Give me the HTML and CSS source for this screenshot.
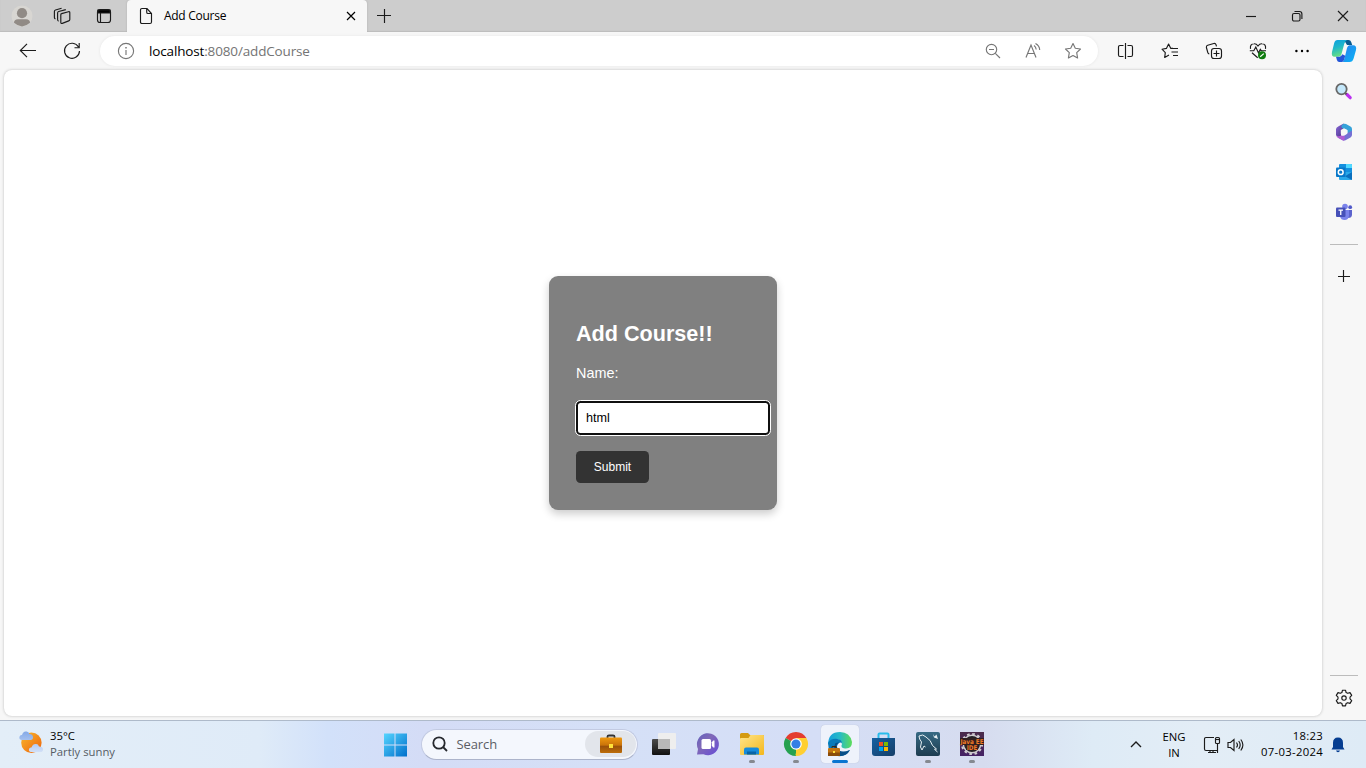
FILE: index.html
```html
<!DOCTYPE html>
<html lang="en">
<head>
<meta charset="utf-8">
<title>Add Course</title>
<link rel="stylesheet" href="styles.css">
</head>
<body>
<div class="screen">
  <header class="titlebar">
    <div class="title-tools">
      <svg class="avatar" width="22" height="22" viewBox="0 0 22 22"><circle cx="11" cy="11" r="10.5" fill="#d8d6d2"/><circle cx="11" cy="8.2" r="5.1" fill="#918b86"/><path d="M3 17.8Q3 14.2 7 14.2H15Q19 14.2 19 17.8Q11 25 3 17.8Z" fill="#918b86"/></svg>
      <svg class="line workspaces" width="18" height="18" viewBox="0 0 18 18"><path d="M8.6 6.6L15.4 4.7Q16.8 4.4 16.8 5.8V12.4Q16.8 13.5 15.7 13.9L9.3 16.4Q7.8 16.8 7.8 15.3V7.7Q7.8 6.8 8.6 6.6ZM5.6 14.2Q4.6 13.8 4.6 12.6V6Q4.6 4.9 5.7 4.5L12.8 2.6M2.4 11.9Q1.4 11.5 1.4 10.4V4.4Q1.4 3.3 2.5 3L8.6 1.2"/></svg>
      <svg class="line tab-actions" width="16" height="16" viewBox="0 0 16 16"><rect x="1.5" y="1.5" width="13" height="13" rx="2.5"/><path d="M2 2H14V5H2Z" fill="#000"/><path d="M4.5 5V14"/></svg>
    </div>
    <div class="tab">
      <svg class="line" width="14" height="18" viewBox="0 0 14 18"><path d="M1.5 3Q1.5 1.5 3 1.5H8L12.5 6.5V15Q12.5 16.5 11 16.5H3Q1.5 16.5 1.5 15ZM7.7 1.6V5.2Q7.7 6.5 9 6.5H12.4"/></svg>
      <span class="tab-title">Add Course</span>
      <svg class="line close-tab" width="10" height="10" viewBox="0 0 10 10"><path d="M1 1L9 9M9 1L1 9"/></svg>
    </div>
    <svg class="line new-tab" width="16" height="16" viewBox="0 0 16 16"><path d="M8.5 1V15M1 7.5H15"/></svg>
    <div class="window-controls">
      <svg class="line" width="12" height="12" viewBox="0 0 12 12"><path d="M1 6.5H11"/></svg>
      <svg class="line" width="12" height="12" viewBox="0 0 12 12"><rect x="1.5" y="3.5" width="7.5" height="7.5" rx="1.5"/><path d="M3.5 1.5H8.5Q10.9 1.5 10.9 4V9"/></svg>
      <svg class="line" width="12" height="12" viewBox="0 0 12 12"><path d="M1 1L11 11M11 1L1 11"/></svg>
    </div>
  </header>

  <nav class="toolbar">
    <div class="slot"><svg class="line" width="18" height="16" viewBox="0 0 18 16"><path d="M17 7.5H1.5M8 .8L1.3 7.5L8 14.2"/></svg></div>
    <div class="slot"><svg class="line" width="18" height="18" viewBox="0 0 18 18"><path d="M15.5 5A7.5 7.5 0 1 0 16.5 9M16.2 1V5.7H11.5"/></svg></div>
    <div class="address">
      <svg class="line muted info" width="18" height="18" viewBox="0 0 18 18"><circle cx="9" cy="9" r="7.6"/><path d="M9 8V13"/><path d="M9 5V6.4" stroke-width="1.5"/></svg>
      <span class="url">localhost<span class="path">:8080/addCourse</span></span>
      <svg class="line muted zoom-out" width="16" height="16" viewBox="0 0 16 16"><circle cx="6.5" cy="6.5" r="5.2"/><path d="M4 6.5H9M10.3 10.3L15 15"/></svg>
      <svg class="line muted" width="18" height="18" viewBox="0 0 18 18"><path d="M2 15.5L7 3L12 15.5M3.7 11.5H10.4M10 3.5Q12 5 12.2 7.5M11.5 1.5Q15.6 3.8 15.7 8"/></svg>
      <svg class="line muted" width="18" height="18" viewBox="0 0 18 18"><path d="M9 1.6L11.3 6.2L16.5 7L12.7 10.7L13.6 16L9 13.5L4.4 16L5.3 10.7L1.5 7L6.7 6.2Z" stroke-linejoin="round"/></svg>
    </div>
    <div class="tools">
      <div class="slot"><svg class="line" width="18" height="18" viewBox="0 0 18 18"><path d="M6.5 3.5H3Q1.5 3.5 1.5 5V13Q1.5 14.5 3 14.5H6.5M10.5 3.5H14Q15.5 3.5 15.5 5V13Q15.5 14.5 14 14.5H10.5M8.5 1V17"/></svg></div>
      <div class="slot"><svg class="line" width="18" height="18" viewBox="0 0 18 18"><path d="M12 6.4H9.8L7.6 2L5.4 6.4L1 7.2L4.3 10.6L3.7 15.5L8 13M11 6.5H17M10.5 10H17M12 13.5H17" stroke-linejoin="round"/></svg></div>
      <div class="slot"><svg class="line" width="18" height="18" viewBox="0 0 18 18"><rect x="6.5" y="6.5" width="10" height="10" rx="2.5"/><path d="M11.5 8.5V14.5M8.5 11.5H14.5M4.3 12Q3.2 11.8 2.8 10.5L1.4 5.5Q1.1 3.8 2.7 3.3L8.8 1.5Q10.5 1.1 11 2.7L11.5 4.3"/></svg></div>
      <div class="slot"><svg class="line" width="18" height="18" viewBox="0 0 18 18"><path d="M1.5 6.8Q.8 2 5 1.8Q7.3 1.6 9 4Q10.7 1.6 13 1.8Q17.2 2 16.5 6.8M.8 8.7H4.8L6.8 5L9.5 11L11.3 7.4L12.2 8.7H17M3 10.8L8.7 15.8"/><circle cx="13" cy="13.2" r="4" fill="#107c10" stroke="none"/><path d="M11.2 14.7L14.8 11.6" stroke="#fff"/></svg></div>
      <div class="slot"><svg width="16" height="4" viewBox="0 0 16 4"><circle cx="2.4" cy="2" r="1.2"/><circle cx="8" cy="2" r="1.2"/><circle cx="13.6" cy="2" r="1.2"/></svg></div>
    </div>
    <svg class="copilot" width="26" height="24" viewBox="0 0 26 24"><defs><linearGradient id="ca" x2=".3" y2="1"><stop stop-color="#0a9ee0"/><stop offset=".5" stop-color="#20b8c8"/><stop offset="1" stop-color="#65df83"/></linearGradient><linearGradient id="cb" x2="1" y2="1"><stop stop-color="#2b80ed"/><stop offset="1" stop-color="#08b5f6"/></linearGradient></defs><path d="M13 1H17.5Q19.6 1 20.2 3L21.2 6H16Z" fill="#075b91"/><path d="M6.5 1H16Q14 2 13.2 5L10.5 15Q9.8 17.8 7 17.8H3.5Q0 17.6 1 13L3.2 4Q4 1 6.5 1Z" fill="url(#ca)"/><path d="M18.5 6.3H22Q26 6.3 25 11L22.6 19.5Q21.6 23 18.5 23H11.5Q12.8 22 13.5 19.5L16 9Q16.8 6.4 18.5 6.3Z" fill="url(#cb)"/><path d="M5 17.8H8.5Q10.3 17.4 11.4 15.3L14.2 16.7L13.5 19.5Q12.5 23 10.8 23H8.2Q6.5 22.8 5.9 21Z" fill="#2456d8"/></svg>
  </nav>

  <div class="workspace">
    <main class="page">
      <form class="card">
        <h2>Add Course!!</h2>
        <label for="name">Name:</label>
        <input id="name" class="name-input" type="text" value="html">
        <button class="submit" type="button">Submit</button>
      </form>
    </main>
    <aside class="sidebar">
      <div class="app"><svg width="18" height="18" viewBox="0 0 18 18"><path d="M12 11.5L15.2 14.7" stroke="#bb31f0" stroke-width="3.2" stroke-linecap="round"/><path d="M9.8 9.6L11.5 11.3" stroke="#555" stroke-width="2"/><circle cx="6.5" cy="6.1" r="5.2" fill="#c4e8fb" stroke="#686868" stroke-width="1.8"/></svg></div>
      <div class="app"><svg width="18" height="18" viewBox="0 0 18 18"><defs><linearGradient id="ma" x2="1" y2="1"><stop stop-color="#8a68dc"/><stop offset="1" stop-color="#46327e"/></linearGradient></defs><path d="M8.8.6L4 3Q1 4.5 1 6V12Q1 13.5 4 14.3L6 13V8L9.5 5.3V2Z" fill="url(#ma)"/><path d="M7 2Q9 0 11 1L15.5 3.6Q17 4.5 17 6V9.5L12.5 11V7.2L7.5 5.2Q5.4 4 7 2Z" fill="#36a2d9"/><path d="M17 7.5V12Q17 13.5 15.5 14.4L10.5 17.2Q9 18 7.5 17.2L2.5 14.4Q5 14.8 7 13.5L12.5 10Q15.8 8.5 17 7.5Z" fill="#7570d4"/><path d="M1.2 12.8Q3 14 6.5 12.5L10 13.6L9 17.7Q8 17.6 7.2 17L2.5 14.4Z" fill="#b15bd3"/><path d="M5.8 7.1L9 5.2L12.3 7.1V10.8L9 12.8L5.8 10.8Z" fill="#f7f7f7"/></svg></div>
      <div class="app"><svg width="18" height="18" viewBox="0 0 18 18"><rect x="4" y="1" width="13" height="9" rx="1" fill="#1490df"/><path d="M11 1H16Q17 1 17 2V5H11Z" fill="#50d9ff"/><path d="M4 9H17V16Q17 17 16 17H5Q4 17 4 16Z" fill="#28a8ea"/><path d="M17 9L10 13.2L17 17Z" fill="#0a6fbd"/><rect x="1" y="4.5" width="9.5" height="9.5" rx="1" fill="#0878c9"/><circle cx="5.7" cy="9.2" r="2.4" fill="none" stroke="#fff" stroke-width="1.5"/></svg></div>
      <div class="app"><svg width="18" height="18" viewBox="0 0 18 18"><circle cx="10" cy="3.5" r="2.8" fill="#7b83eb"/><circle cx="15.2" cy="4.2" r="1.9" fill="#5059c9"/><path d="M12 7H17V11.5Q17 15 13 15Z" fill="#5c63cd"/><path d="M5 7H14V12.5Q13.5 17 9.5 17Q6 17 5 13.5Z" fill="#7b83eb"/><rect x="1" y="4.5" width="9.5" height="9.5" rx="1" fill="#4650b8"/><path d="M3.5 7.2H8M5.75 7.2V12" stroke="#fff" stroke-width="1.3"/></svg></div>
      <div class="rule"></div>
      <div class="app add"><svg class="line" width="12" height="12" viewBox="0 0 12 12"><path d="M5.5 0V12M0 6.5H12"/></svg></div>
      <div class="rule bottom-rule"></div>
      <div class="app gear"><svg class="line" width="18" height="18" viewBox="0 0 18 18"><circle cx="9" cy="9" r="2.2"/><path stroke-linejoin="round" d="M7.5 1.2H10.5L11.1 3.5L12.7 4.3L15 3.6L16.7 6.4L15 8.2V9.8L16.7 11.6L15 14.4L12.7 13.7L11.1 14.5L10.5 16.8H7.5L6.9 14.5L5.3 13.7L3 14.4L1.3 11.6L3 9.8V8.2L1.3 6.4L3 3.6L5.3 4.3L6.9 3.5Z"/></svg></div>
    </aside>
  </div>

  <footer class="taskbar">
    <div class="weather">
      <svg width="25" height="24" viewBox="0 0 25 24"><defs><linearGradient id="sun" x2="1" y2="1"><stop stop-color="#f9b82b"/><stop offset="1" stop-color="#ed620c"/></linearGradient><linearGradient id="cloud" x2="0" y2="1"><stop stop-color="#83a9e8"/><stop offset="1" stop-color="#d2e0f7"/></linearGradient></defs><circle cx="12.4" cy="12.8" r="10.2" fill="url(#sun)"/><path d="M3 10Q0 9.8 .4 7Q.8 4.8 3 5Q4.2 .8 7.6 1.6Q9.8 1.9 10.4 4Q14 4.2 14 7.3Q14 10 11.5 10ZM12 22Q9.4 21.6 10 19Q10.6 17.1 12.4 17.5Q14 13.7 17 14.1Q19.2 14 20 16.5Q24 16.8 24 19.2Q24 22 21.8 22Z" fill="url(#cloud)"/></svg>
      <div class="weather-text"><span>35°C</span><span class="condition">Partly sunny</span></div>
    </div>
    <div class="launcher">
      <svg class="start" width="24" height="24" viewBox="0 0 24 24"><defs><linearGradient id="win" x2="1" y2="1"><stop stop-color="#56d5ff"/><stop offset="1" stop-color="#006fcb"/></linearGradient></defs><path d="M1 .5H11.5V11.5H1ZM12.5.5H24V11.5H12.5ZM1 12.5H11.5V23.5H1ZM12.5 12.5H24V23.5H12.5Z" fill="url(#win)"/></svg>
      <div class="search">
        <svg width="16" height="16" viewBox="0 0 16 16"><g fill="none" stroke="#25282d" stroke-width="1.8"><circle cx="7" cy="7" r="5.7"/><path d="M11 11L15 15"/></g></svg>
        <span>Search</span>
        <div class="highlight"><svg width="24" height="20" viewBox="0 0 24 20"><defs><linearGradient id="brief" x2="0" y2="1"><stop stop-color="#ee980f"/><stop offset=".5" stop-color="#c9730a"/><stop offset=".55" stop-color="#98500b"/><stop offset="1" stop-color="#bd6d09"/></linearGradient></defs><path d="M8.5 4V2.5Q8.5 1.5 10 1.5H14Q15.5 1.5 15.5 2.5V4" fill="none" stroke="#333" stroke-width="1.8"/><rect x="1" y="3.5" width="22" height="15.5" rx="1" fill="url(#brief)"/><rect x="10" y="10" width="4" height="4" fill="#ffe23a"/></svg></div>
      </div>
      <div class="apps">
        <div class="task"><svg width="24" height="24" viewBox="0 0 24 24"><defs><linearGradient id="dark" x2="0" y2="1"><stop stop-color="#4b4b4b"/><stop offset="1" stop-color="#111"/></linearGradient></defs><rect x="0" y="7" width="18" height="16" rx="1" fill="url(#dark)"/><rect x="6" y="1" width="18" height="16" rx="1" fill="#eee"/><path d="M6 7H18V17H6Z" fill="#b9b9b9"/></svg></div>
        <div class="task"><svg width="24" height="24" viewBox="0 0 24 24"><defs><linearGradient id="chat" x2="1" y2="1"><stop stop-color="#6262bd"/><stop offset=".4" stop-color="#8069b8"/><stop offset="1" stop-color="#664bd7"/></linearGradient></defs><path d="M1 22.5L2 17A11 11 0 1 1 7.5 22.3Z" fill="url(#chat)"/><rect x="5.5" y="7" width="9.5" height="10" rx="1.5" fill="#fff"/><path d="M15.8 10.2L17.2 8.5H18.5V15.5H17.2L15.8 13.8Z" fill="#fff"/></svg></div>
        <div class="task running"><svg width="24" height="24" viewBox="0 0 24 24"><defs><linearGradient id="folder" x2="1" y2="1"><stop stop-color="#ffe58b"/><stop offset="1" stop-color="#f4b71c"/></linearGradient></defs><path d="M0 2.5Q0 1 1.5 1H8L10 3H23Q24 3 24 4V8H0Z" fill="#d49a10"/><path d="M0 7Q0 6 1 6H8.5L10.5 3H23Q24 3 24 4V22Q24 23 23 23H1Q0 23 0 22Z" fill="url(#folder)"/><path d="M4 22.5V17.5Q4 15.5 6 15.5H17Q19 15.5 19 17.5V22.5Z" fill="#168bdc"/><path d="M7 19.5H16V22.5H7Z" fill="#0864a8"/></svg></div>
        <div class="task running"><svg width="24" height="24" viewBox="0 0 24 24"><path d="M12 12L1.6 6A12 12 0 0 1 22.4 6Z" fill="#e43d2f"/><path d="M12 12L22.4 6A12 12 0 0 1 12 24Z" fill="#ffcf32"/><path d="M12 12L12 24A12 12 0 0 1 1.6 6Z" fill="#25a150"/><path d="M12 6H22.4L16.8 15L12 24Q10 22 15.8 16Z" fill="#ffcf32"/><circle cx="12" cy="12" r="5.8" fill="#fff"/><circle cx="12" cy="12" r="4.6" fill="#347fe4"/></svg></div>
        <div class="task active running"><svg width="24" height="24" viewBox="0 0 24 24"><defs><linearGradient id="edge" x2="1"><stop stop-color="#159fdb"/><stop offset=".5" stop-color="#27bbc6"/><stop offset="1" stop-color="#5ddd58"/></linearGradient></defs><path d="M0 13Q0 0 12 0Q22 0 24 10Q24 17 17 16.5Q12 16 14 12Q13 7 8 7Q2 7 0 13Z" fill="url(#edge)"/><path d="M0 11Q2 6.5 8 6.7Q14 7 14 11.5Q13 10 11 11Q7 14 11 19Q15 22 22 18Q18 25 9.5 24Q0 21 0 11Z" fill="#087ab9"/><path d="M7.5 11Q3 19 11 23.8Q18 25 22 18Q12 22 9 16Q7.5 13 11 10.5Z" fill="#064e88"/><rect x="0" y="16" width="12" height="8" rx="1" fill="#c27411"/><path d="M0 20.5H12V24H0Z" fill="#8b4d09"/><path d="M4 16V14.5H8V16" fill="none" stroke="#392819"/><rect x="5" y="19" width="2" height="2" fill="#ffdf3c"/></svg></div>
        <div class="task"><svg width="24" height="24" viewBox="0 0 24 24"><defs><linearGradient id="store" x2="1" y2="1"><stop stop-color="#1561a3"/><stop offset="1" stop-color="#163e67"/></linearGradient></defs><path d="M6.5 7V2.5Q6.5 1.5 7.5 1.5H15.5Q16.5 1.5 16.5 2.5V7" fill="none" stroke="#28bceb" stroke-width="2"/><path d="M0 6H23V21Q23 24 20 24H3Q0 24 0 21Z" fill="url(#store)"/><path d="M7 10H11V14H7Z" fill="#f25022"/><path d="M12 10H16V14H12Z" fill="#7fba00"/><path d="M7 15H11V19H7Z" fill="#00a4ef"/><path d="M12 15H16V19H12Z" fill="#ffb900"/></svg></div>
        <div class="task running"><svg width="24" height="24" viewBox="0 0 24 24"><defs><linearGradient id="sql" x2="0" y2="1"><stop stop-color="#376a84"/><stop offset="1" stop-color="#1d3c50"/></linearGradient></defs><rect width="24" height="24" rx="2" fill="url(#sql)"/><path d="M3 4Q7 1.5 10 5Q15 8 16.5 13.5L20.5 17L18.5 17.3L21.5 20M3 4Q3 7 5.5 10L4.5 15L6 18L8 14L9.5 15" fill="none" stroke="#e6eff3" stroke-width="1"/><path d="M17 2L18.5 4.5L20.5 2.5L22 7L18 5.5Z" fill="#e6eff3"/></svg></div>
        <div class="task running"><svg class="java-icon" width="24" height="24" viewBox="0 0 24 24"><defs><linearGradient id="java" x2="0" y2="1"><stop stop-color="#4a2b4a"/><stop offset="1" stop-color="#462365"/></linearGradient></defs><rect width="24" height="24" fill="url(#java)"/><circle cx="12" cy="12" r="10" fill="none" stroke="#d0cdd0" stroke-width="2.2" stroke-dasharray="2.6 2.63"/><circle cx="12" cy="12" r="8.7" fill="#242024" stroke="#d0cdd0" stroke-width="1.4"/><path d="M0 6H24V13H18V18H6V13H0Z" fill="#31201f"/><text x=".4" y="11.5" textLength="23.2" lengthAdjust="spacingAndGlyphs">Java EE</text><text x="6.7" y="17.6" textLength="10.6" lengthAdjust="spacingAndGlyphs">IDE</text></svg></div>
      </div>
    </div>
    <div class="tray">
      <svg class="line chevron" width="12" height="8" viewBox="0 0 12 8"><path d="M1 6L6 1L11 6"/></svg>
      <div class="language"><span>ENG</span><span>IN</span></div>
      <svg class="line network" width="18" height="18" viewBox="0 0 18 18"><path d="M11 1.5H3Q1.5 1.5 1.5 3V13Q1.5 14.5 3 14.5H14M5 16.5H13M7 14.5V16.5M10 14.5V16.5M14.5 8V17"/><rect x="12.5" y="1.5" width="4" height="6" rx="1"/><path d="M13 3.5H16"/></svg>
      <svg class="line volume" width="18" height="16" viewBox="0 0 18 16"><path d="M1 5.5H3.5L7 2.5V13.5L3.5 10.5H1ZM9.5 5.5Q11.5 8 9.5 10.5M11.7 4Q14.7 8 11.7 12M13.8 2.5Q18 8 13.8 13.5"/></svg>
      <div class="clock"><span>18:23</span><span>07-03-2024</span></div>
      <svg class="bell" width="14" height="16" viewBox="0 0 14 16"><path d="M2 10V6Q2 .5 7 .5Q12 .5 12 6V10L13.5 12.5H.5ZM5 13.5H9Q8.5 15.3 7 15.3Q5.5 15.3 5 13.5Z" fill="#053d91"/></svg>
    </div>
  </footer>
</div>
</body>
</html>
```
FILE: styles.css
```css
* { box-sizing: border-box; }
body { margin: 0; font-family: "Open Sans", "Noto Sans", sans-serif; }
svg { display: block; flex-shrink: 0; overflow: visible; }
.line { fill: none; stroke: #1b1b1b; stroke-width: 1.15; }
.muted { stroke: #777; }
.screen { width: 1366px; height: 768px; display: flex; flex-direction: column; background: #f7f7f7; overflow: hidden; }
.titlebar { height: 32px; flex-shrink: 0; display: flex; align-items: center; background: #cdcdcd; box-shadow: inset 0 -1px 1px #bdbdbd; }
.title-tools { width: 127px; padding: 0 0 0 11px; display: flex; align-items: center; }
.workspaces { margin-left: 20px; }
.tab-actions { margin-left: 25px; }
.tab { width: 240px; height: 32px; border-radius: 4px 4px 0 0; background: #f7f7f7; display: flex; align-items: center; padding: 0 11px 0 12px; box-shadow: 0 0 2px #aaa; clip-path: inset(0 -2px 0 -2px); }
.tab-title { margin: -1px 0 0 11px; font-size: 12px; letter-spacing: -.28px; }
.close-tab { margin-left: auto; stroke: #000; }
.new-tab { margin-left: 9px; }
.window-controls { display: flex; gap: 34px; margin-left: auto; padding-right: 17px; }
.toolbar { height: 38px; flex-shrink: 0; display: flex; align-items: center; padding-left: 6px; }
.slot { width: 44px; display: flex; justify-content: center; align-items: center; }
.address { width: 998px; height: 30px; margin-left: 6px; border-radius: 15px; background: #fff; box-shadow: 0 0 3px #e5e5e5; display: flex; align-items: center; padding: 0 16px 0 17px; gap: 22px; }
.url { font-size: 13.5px; margin-left: -8px; margin-right: auto; letter-spacing: -.15px; }
.zoom-out { margin-right: 1px; }
.path { color: #747474; }
.tools { display: flex; margin-left: 6px; }
.copilot { margin-left: 7px; }
.workspace { height: 650px; flex-shrink: 0; display: flex; padding-left: 4px; }
.page { width: 1318px; height: 646px; border-radius: 8px; background: #fff; box-shadow: 0 0 3px #bbb; display: flex; align-items: center; justify-content: center; font-family: "Liberation Sans", Arial, sans-serif; }
.card { width: 228px; height: 234px; padding: 44px 27px 27px; border-radius: 9px; background: #808080; color: #fff; box-shadow: 0 4px 8px rgba(0,0,0,.2); }
.card h2 { margin: 0; font-size: 21.6px; line-height: 27px; font-weight: 700; white-space: nowrap; }
.card label { display: block; margin-top: 18px; font-size: 14.4px; line-height: 17px; }
.name-input { display: block; width: 194px; height: 34px; margin: 19px 0 0; padding: 0 8px 1px; border: 2px solid #101010; border-radius: 4.5px; outline: 1px solid #fff; font: 12.6px "Liberation Sans", Arial, sans-serif; color: #000; }
.submit { display: block; width: 73px; height: 32px; margin-top: 16px; padding: 0; border: 0; border-radius: 4.5px; background: #333; color: #fff; font: 12px "Liberation Sans", Arial, sans-serif; }
.sidebar { width: 44px; display: flex; flex-direction: column; align-items: center; padding-top: 2px; }
.app { width: 40px; height: 40px; flex-shrink: 0; display: flex; align-items: center; justify-content: center; }
.rule { width: 28px; height: 1px; background: #bcbcbc; margin-top: 12px; flex-shrink: 0; }
.add { margin-top: 11px; }
.bottom-rule { margin-top: auto; }
.gear { height: 44px; }
.taskbar { height: 48px; flex-shrink: 0; border-top: 1px solid #aebaca; display: grid; grid-template-columns: 373.5px 620px 1fr; background: linear-gradient(90deg, #e3eef8 0, #dfebf8 19%, #d2e1fa 24%, #d4dcf6 31%, #d5e0f7 45%, #d5def6 60%, #d6dcef 72%, #deebf6 80%, #e3edf6 88%, #deebf6 100%); font-size: 11.3px; line-height: 16px; }
.weather { display: flex; padding: 9px 0 0 19px; }
.weather-text { margin: -2px 0 0 6px; display: flex; flex-direction: column; }
.condition { color: #555c64; }
.launcher { display: flex; align-items: center; padding-left: 9.5px; }
.start { margin-right: 13.5px; }
.search { width: 218px; height: 31px; margin-top: -1px; border: 1px solid #c2cae2; border-bottom-color: #acb4cb; border-radius: 16px; background: #f4f7fd; display: flex; align-items: center; padding: 0 1px 0 10px; }
.search > span { margin-left: 9px; font-size: 13px; letter-spacing: -.1px; color: #5b5e64; }
.highlight { width: 51px; height: 26px; margin-left: auto; border-radius: 13px; background: #e2e5eb; display: flex; align-items: center; justify-content: center; }
.apps { display: flex; height: 47px; margin-left: 3.5px; }
.task { width: 38px; height: 38px; margin: 4px 3px 0; display: flex; align-items: center; justify-content: center; border-radius: 4px; position: relative; }
.active { background: #eef2fb; box-shadow: 0 0 1px #aab2c4; }
.running::after { content: ""; position: absolute; bottom: 0; left: 16px; width: 6px; height: 3px; border-radius: 2px; background: #858990; }
.active::after { width: 16px; left: 11px; background: #0875d1; }
.java-icon text { font: 700 6.5px "DejaVu Sans", sans-serif; fill: #ee7927; }
.tray { display: flex; align-items: center; justify-content: flex-end; padding-right: 21px; }
.chevron { margin-right: 20px; stroke-width: 1.4; }
.language { width: 24px; display: flex; flex-direction: column; align-items: center; margin: 1px 17px 0 0; }
.network { margin-right: 6px; }
.clock { width: 63px; display: flex; flex-direction: column; align-items: flex-end; white-space: nowrap; letter-spacing: .3px; margin: -1px 8px 0 15px; }
```
